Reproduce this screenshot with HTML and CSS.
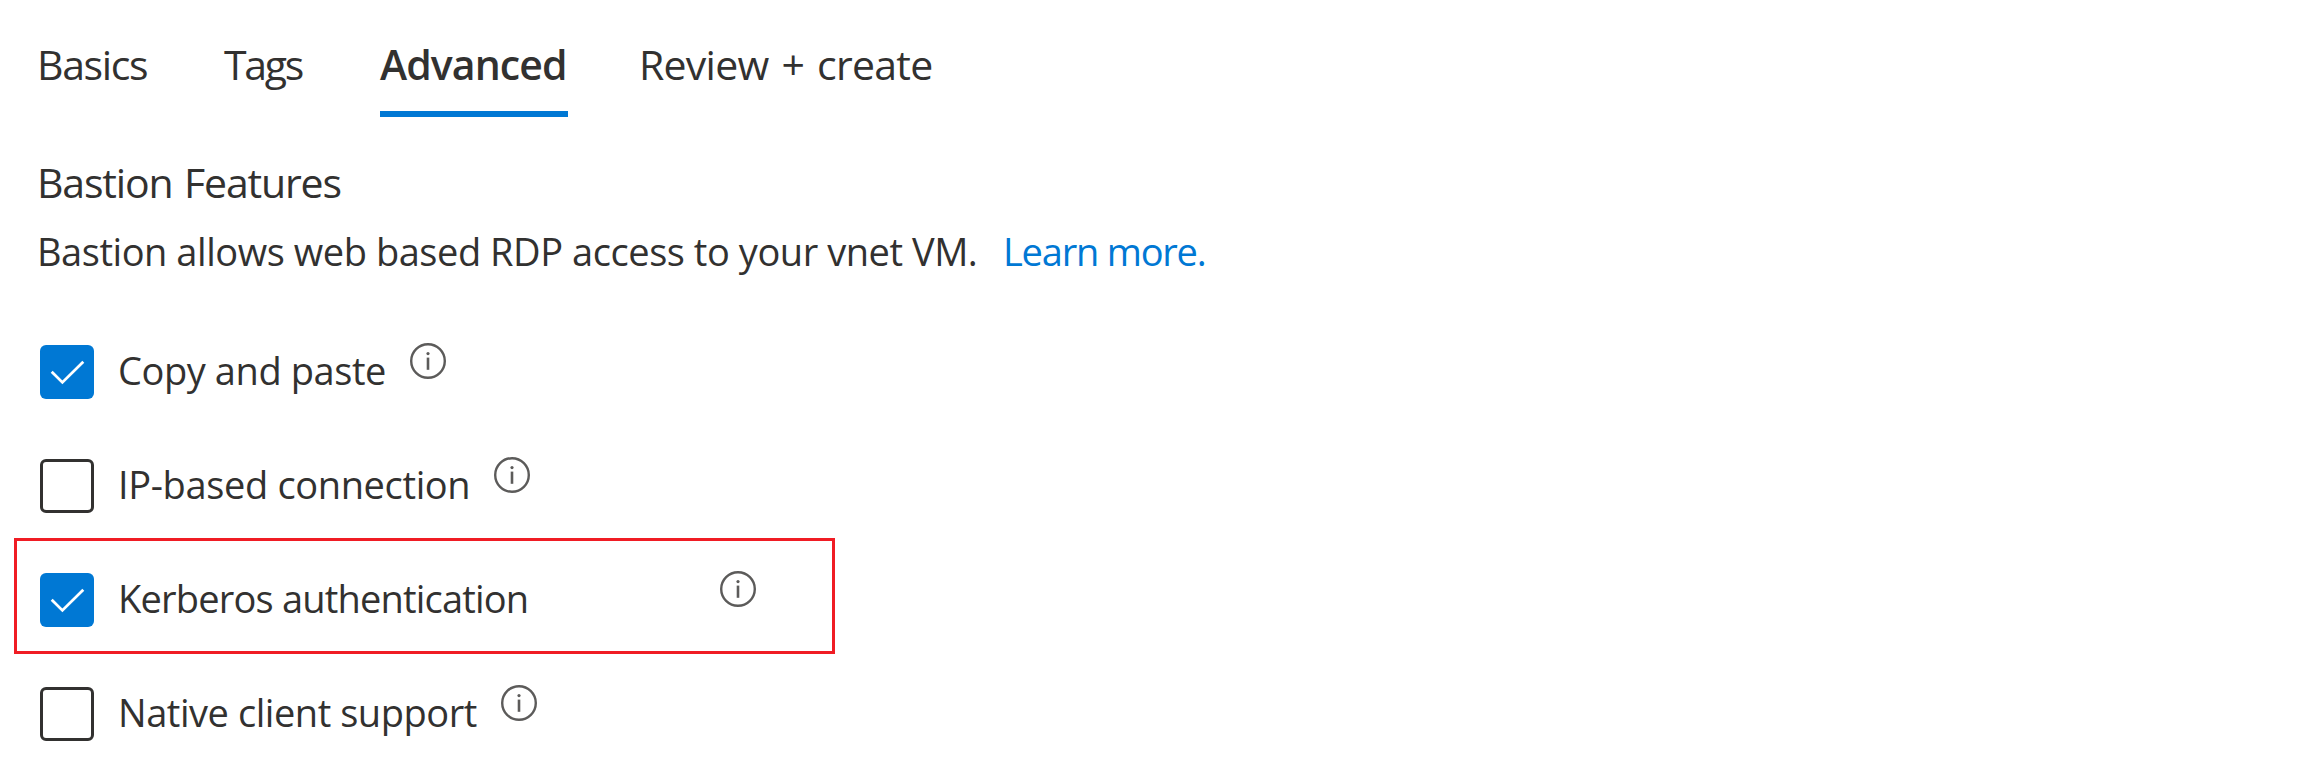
FILE: index.html
```html
<!DOCTYPE html>
<html lang="en">
<head>
<meta charset="utf-8">
<title>Create a Bastion</title>
<link rel="stylesheet" href="styles.css">
</head>
<body>
<svg class="defs" aria-hidden="true">
  <symbol id="check" viewBox="0 0 54 54"><path d="M11.7 26.8 22.4 37.4 43.3 16.8" fill="none" stroke="#fff" stroke-width="2.8"/></symbol>
  <symbol id="info" viewBox="0 0 36 36"><circle cx="18" cy="18" r="16.8" fill="none" stroke="#5c5b5a" stroke-width="2.4"/><circle cx="18" cy="10.6" r="1.6" fill="#5c5b5a"/><path d="M18 14.6V26.8" stroke="#5c5b5a" stroke-width="2.6"/></symbol>
</svg>
<nav class="tabs">
  <a class="tab tab-basics">Basics</a>
  <a class="tab tab-tags">Tags</a>
  <a class="tab tab-advanced active">Advanced</a>
  <a class="tab tab-review">Review + create</a>
</nav>
<main class="content">
  <h2 class="heading">Bastion Features</h2>
  <p class="description"><span class="summary">Bastion allows web based RDP access to your vnet VM.</span><a class="link">Learn more.</a></p>
  <div class="options">
    <div class="option">
      <span class="box checked"><svg class="mark"><use href="#check"/></svg></span>
      <span class="label copy">Copy and paste</span>
      <svg class="info"><use href="#info"/></svg>
    </div>
    <div class="option">
      <span class="box"></span>
      <span class="label ip">IP-based connection</span>
      <svg class="info"><use href="#info"/></svg>
    </div>
    <div class="option highlighted">
      <span class="box checked"><svg class="mark"><use href="#check"/></svg></span>
      <span class="label kerberos">Kerberos authentication</span>
      <svg class="info"><use href="#info"/></svg>
    </div>
    <div class="option">
      <span class="box"></span>
      <span class="label native">Native client support</span>
      <svg class="info"><use href="#info"/></svg>
    </div>
  </div>
</main>
</body>
</html>
```
FILE: styles.css
```css
*, *::after { box-sizing: border-box; }

body {
  margin: 0;
  padding: 34px 0 0 37px;
  background: #fff;
  color: #323130;
  font-family: "Open Sans", "Noto Sans", sans-serif;
}

.defs { display: none; }

.tabs {
  display: flex;
  font-size: 41px;
  line-height: 60px;
}

.tab {
  height: 83px;
  white-space: nowrap;
}

.tab-basics { width: 187px; letter-spacing: -1.35px; }
.tab-tags { width: 156px; letter-spacing: -2.3px; }
.tab-advanced { width: 188px; margin-right: 71px; letter-spacing: -0.9px; }
.tab-review { letter-spacing: -0.74px; word-spacing: 3px; }

.active {
  border-bottom: 6px solid #0078d4;
  font-weight: 600;
}

.heading {
  margin: 35px 0 9px;
  font-size: 41px;
  font-weight: 400;
  line-height: 60px;
  letter-spacing: -1.15px;
  word-spacing: 2px;
}

.description {
  display: flex;
  margin: 0;
  font-size: 38px;
  line-height: 60px;
  white-space: nowrap;
}

.summary { width: 966px; letter-spacing: -0.45px; }
.link { color: #0078d4; letter-spacing: -1.22px; }

.options { padding: 34px 0 0 3px; }

.option {
  position: relative;
  display: flex;
  align-items: center;
  height: 114px;
}

.box {
  width: 54px;
  height: 54px;
  margin-right: 24px;
  border: 3px solid #323130;
  border-radius: 6px;
}

.checked {
  border: 0;
  background: #0078d4;
}

.mark { display: block; width: 54px; height: 54px; }

.label {
  padding-bottom: 4px;
  font-size: 38px;
  line-height: 60px;
  white-space: nowrap;
}

.copy { width: 292px; letter-spacing: -0.42px; }
.ip { width: 376px; letter-spacing: -0.36px; }
.kerberos { width: 602px; letter-spacing: -0.8px; }
.native { width: 383px; letter-spacing: -0.45px; }

.info {
  width: 36px;
  height: 36px;
  margin-bottom: 22px;
}

/* Callout frame drawn over the option row */
.highlighted::after {
  content: "";
  position: absolute;
  top: -5px;
  left: -26px;
  width: 821px;
  height: 116px;
  border: 3px solid #f01c24;
}
```
